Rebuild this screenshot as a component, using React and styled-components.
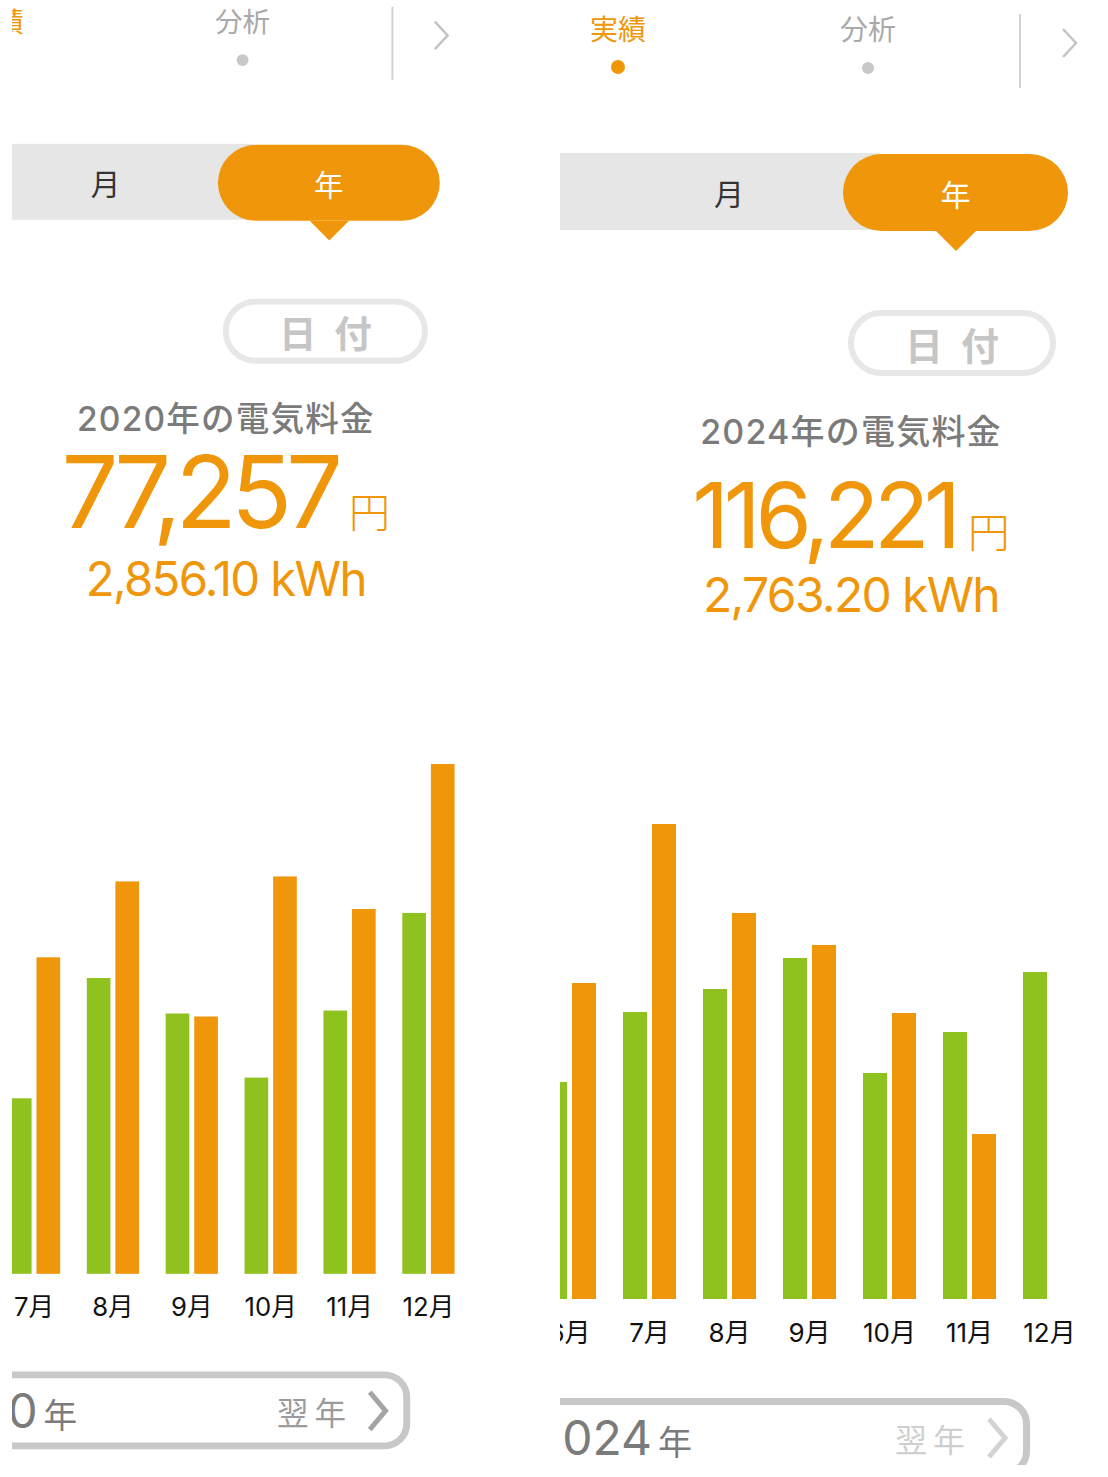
import React from "react";
import styled, { createGlobalStyle } from "styled-components";

const ORANGE = "#f0960a";
const GREEN = "#8fc21f";

const GlobalStyle = createGlobalStyle`
  html, body {
    margin: 0;
    padding: 0;
    background: #ffffff;
  }
  body {
    font-family: Inter, "Noto Sans CJK JP", sans-serif;
    -webkit-font-smoothing: antialiased;
  }
`;

const panels = [
  {
    id: "2020",
    crop: { left: 12, width: 448, height: 1477 },
    scale: 0.986,
    dx: -152.3,
    dy: -7.5,
    title: "2020年の電気料金",
    amount: "77,257",
    amountSize: 102,
    amountTop: 5,
    kwh: "2,856.10 kWh",
    kwhTop: 14,
    chartPad: 150,
    shift: 8,
    months: [
      ["7月", 178, 321],
      ["8月", 300, 398],
      ["9月", 264, 261],
      ["10月", 199, 403],
      ["11月", 267, 370],
      ["12月", 366, 517],
    ],
    hasNext: true,
  },
  {
    id: "2024",
    crop: { left: 100, width: 548, height: 1465 },
    scale: 1,
    dx: -80,
    dy: 0,
    title: "2024年の電気料金",
    amount: "116,221",
    amountSize: 91,
    amountTop: 19.6,
    kwh: "2,763.20 kWh",
    kwhTop: 10.8,
    chartPad: 63,
    shift: 0,
    months: [
      ["6月", 217, 316],
      ["7月", 287, 475],
      ["8月", 310, 386],
      ["9月", 341, 354],
      ["10月", 226, 286],
      ["11月", 267, 165],
      ["12月", 327, 0],
    ],
    hasNext: false,
  },
];

const App = () => {
  return (
    <>
      <GlobalStyle />
      <Page>
        {panels.map((p) => (
          <Crop
            key={p.id}
            $left={p.crop.left}
            $width={p.crop.width}
            $height={p.crop.height}
          >
            <Screen $dx={p.dx} $dy={p.dy} $scale={p.scale}>
              <Header>
                <Tab>
                  <TabLabel $active>実績</TabLabel>
                  <TabDot $active />
                </Tab>
                <Tab>
                  <TabLabel>分析</TabLabel>
                  <TabDot />
                </Tab>
                <Divider />
                <TopChevron viewBox="0 0 20 34">
                  <polyline points="3,3 16,17 3,31" />
                </TopChevron>
              </Header>

              <Segment>
                <MonthOption>月</MonthOption>
                <YearPill>年</YearPill>
              </Segment>

              <DateButton>日付</DateButton>

              <Title>{p.title}</Title>
              <AmountRow $top={p.amountTop}>
                <Amount $size={p.amountSize}>{p.amount}</Amount>
                <Yen>円</Yen>
              </AmountRow>
              <Kwh $top={p.kwhTop}>{p.kwh}</Kwh>

              <Chart $pad={p.chartPad}>
                {p.months.map(([label, used, cost]) => (
                  <Group key={label}>
                    <Bars>
                      <Bar $color={GREEN} style={{ height: used }} />
                      <Bar $color={ORANGE} style={{ height: cost }} />
                    </Bars>
                    <MonthLabel>{label}</MonthLabel>
                  </Group>
                ))}
              </Chart>

              <YearNav $shift={p.shift}>
                <YearText>
                  {p.id}
                  <YearUnit>年</YearUnit>
                </YearText>
                <NextYear $enabled={p.hasNext}>
                  <NextLabel>翌年</NextLabel>
                  <NavChevron viewBox="0 0 24 44">
                    <polyline points="4,3 20,22 4,41" />
                  </NavChevron>
                </NextYear>
              </YearNav>
            </Screen>
          </Crop>
        ))}
      </Page>
    </>
  );
};

const Page = styled.div`
  display: flex;
  align-items: flex-start;
  width: 1108px;
  height: 1477px;
  overflow: hidden;
  background: #ffffff;
`;

const Crop = styled.div`
  flex: none;
  width: ${(p) => p.$width}px;
  height: ${(p) => p.$height}px;
  margin-left: ${(p) => p.$left}px;
  overflow: hidden;
`;

const Screen = styled.div`
  width: 742px;
  margin-left: ${(p) => p.$dx}px;
  margin-top: ${(p) => p.$dy}px;
  transform: scale(${(p) => p.$scale});
  transform-origin: 0 0;
  display: flex;
  flex-direction: column;
  align-items: flex-start;
`;

const Header = styled.div`
  display: flex;
  align-items: flex-start;
  height: 88px;
  padding: 14px 0 0 13px;
  box-sizing: border-box;
`;

const Tab = styled.div`
  width: 250px;
  display: flex;
  flex-direction: column;
  align-items: center;
`;

const TabLabel = styled.span`
  font-size: 28px;
  line-height: 32px;
  color: ${(p) => (p.$active ? ORANGE : "#a9a9a9")};
`;

const TabDot = styled.span`
  width: ${(p) => (p.$active ? 14 : 12)}px;
  height: ${(p) => (p.$active ? 14 : 12)}px;
  margin-top: ${(p) => (p.$active ? 14 : 16)}px;
  border-radius: 50%;
  background: ${(p) => (p.$active ? ORANGE : "#c8c8c8")};
`;

const Divider = styled.div`
  width: 2px;
  height: 74px;
  margin-left: 26px;
  background: #d2d2d2;
`;

const TopChevron = styled.svg`
  width: 20px;
  height: 34px;
  margin: 12px 0 0 39px;
  fill: none;
  stroke: #c4c4c4;
  stroke-width: 2.5;
`;

const Segment = styled.div`
  display: flex;
  align-items: flex-start;
  width: 588px;
  height: 99px;
  margin-top: 65px;
  background: linear-gradient(#e6e6e6, #e6e6e6) no-repeat 0 0 / 400px 77px;
`;

const MonthOption = styled.div`
  width: 228px;
  height: 77px;
  margin-left: 135px;
  display: flex;
  align-items: center;
  justify-content: center;
  font-size: 30px;
  color: #333333;
`;

const YearPill = styled.div`
  position: relative;
  width: 225px;
  height: 77px;
  margin-top: 1px;
  border-radius: 39px;
  background: ${ORANGE};
  display: flex;
  align-items: center;
  justify-content: center;
  font-size: 30px;
  color: #ffffff;

  &::after {
    content: "";
    position: absolute;
    top: 100%;
    left: 50%;
    margin-left: -20px;
    border-left: 20px solid transparent;
    border-right: 20px solid transparent;
    border-top: 20px solid ${ORANGE};
  }
`;

const DateButton = styled.div`
  width: 208px;
  height: 66px;
  margin: 58px 0 0 368px;
  box-sizing: border-box;
  border: 6px solid #e7e7e7;
  border-radius: 33px;
  display: flex;
  align-items: center;
  justify-content: center;
  padding-left: 18px;
  font-size: 38px;
  font-weight: 700;
  letter-spacing: 18px;
  color: #c6c6c6;
`;

const Title = styled.div`
  width: 742px;
  margin-top: 38px;
  text-align: center;
  font-size: 34px;
  line-height: 36px;
  font-weight: 500;
  letter-spacing: 1.2px;
  color: #7b7b7b;
`;

const AmountRow = styled.div`
  width: 742px;
  margin-top: ${(p) => p.$top}px;
  display: flex;
  justify-content: center;
  align-items: baseline;
  color: ${ORANGE};
`;

const Amount = styled.span`
  font-size: ${(p) => p.$size}px;
  line-height: 1;
  letter-spacing: -0.06em;
`;

const Yen = styled.span`
  margin-left: 12px;
  font-family: "Noto Sans CJK JP", sans-serif;
  font-size: 42px;
  font-weight: 300;
  line-height: 1;
`;

const Kwh = styled.div`
  width: 742px;
  margin-top: ${(p) => p.$top}px;
  text-align: center;
  font-size: 48px;
  line-height: 1;
  letter-spacing: -0.035em;
  color: ${ORANGE};
`;

const Chart = styled.div`
  display: flex;
  align-items: flex-start;
  gap: 27px;
  margin-top: 120px;
  padding-left: ${(p) => p.$pad}px;
`;

const Group = styled.div`
  width: 53px;
  display: flex;
  flex-direction: column;
  align-items: center;
`;

const Bars = styled.div`
  display: flex;
  align-items: flex-end;
  gap: 5px;
  height: 560px;
`;

const Bar = styled.div`
  width: 24px;
  background: ${(p) => p.$color};
`;

const MonthLabel = styled.div`
  margin-top: 19px;
  font-size: 26px;
  line-height: 30px;
  white-space: nowrap;
  color: #111111;
`;

const YearNav = styled.div`
  width: 530px;
  height: 79px;
  margin: 50px 0 0 ${(p) => 20 + p.$shift}px;
  box-sizing: border-box;
  border: 7px solid #c8c8c8;
  border-radius: 26px;
  padding: 0 14px 0 26px;
  display: flex;
  align-items: center;
  justify-content: space-between;
`;

const YearText = styled.div`
  display: flex;
  align-items: baseline;
  font-size: 48px;
  line-height: 1;
  color: #7b7b7b;
`;

const YearUnit = styled.span`
  margin-left: 6px;
  font-size: 34px;
`;

const NextYear = styled.div`
  display: flex;
  align-items: center;
  color: ${(p) => (p.$enabled ? "#9b9b9b" : "#cfcfcf")};
`;

const NextLabel = styled.span`
  font-size: 32px;
  letter-spacing: 6px;
`;

const NavChevron = styled.svg`
  width: 24px;
  height: 44px;
  margin-left: 14px;
  fill: none;
  stroke: currentColor;
  stroke-width: 5;
  opacity: 0.9;
`;

export default App;
